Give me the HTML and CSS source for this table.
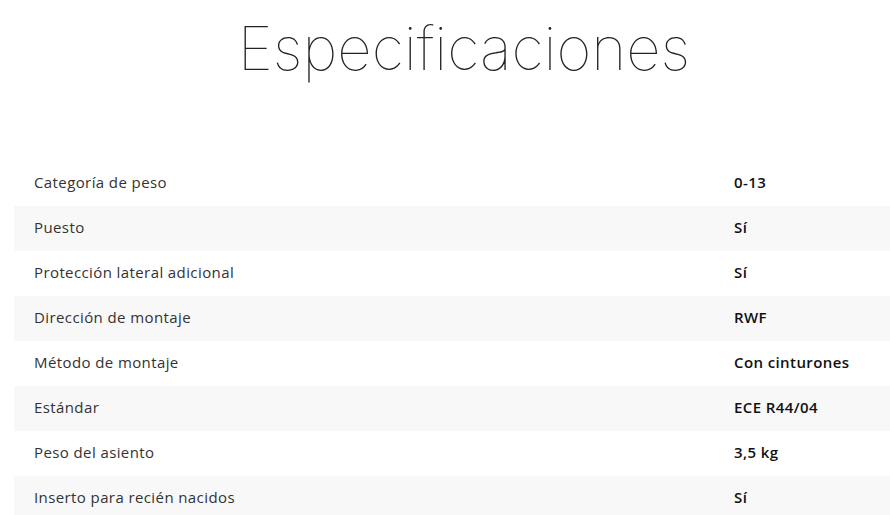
FILE: index.html
```html
<!DOCTYPE html>
<html lang="es">
<head>
<meta charset="utf-8">
<link rel="stylesheet" href="styles.css">
</head>
<body>
<main class="page">
  <h1 class="title">Especificaciones</h1>
  <table class="specs">
    <colgroup><col class="col-label"><col class="col-value"></colgroup>
    <tr><td class="label">Categoría de peso</td><td class="value">0-13</td></tr>
    <tr><td class="label">Puesto</td><td class="value">Sí</td></tr>
    <tr><td class="label">Protección lateral adicional</td><td class="value">Sí</td></tr>
    <tr><td class="label">Dirección de montaje</td><td class="value">RWF</td></tr>
    <tr><td class="label">Método de montaje</td><td class="value">Con cinturones</td></tr>
    <tr><td class="label">Estándar</td><td class="value">ECE R44/04</td></tr>
    <tr><td class="label">Peso del asiento</td><td class="value">3,5 kg</td></tr>
    <tr><td class="label">Inserto para recién nacidos</td><td class="value">Sí</td></tr>
  </table>
</main>
</body>
</html>
```
FILE: styles.css
```css
html, body {
  margin: 0;
  padding: 0;
  overflow: hidden;
  background: #fff;
}
.page {
  width: 900px;
  margin-left: 14px;
  font-family: "Open Sans", "DejaVu Sans", sans-serif;
}
.title {
  margin: 0;
  padding-top: 10px;
  height: 161px;
  box-sizing: border-box;
  text-align: center;
  font-family: Inter, sans-serif;
  font-weight: 100;
  font-size: 60px;
  line-height: 76px;
  color: #222;
}
.specs {
  width: 900px;
  border-collapse: collapse;
  table-layout: fixed;
}
.col-label {
  width: 700px;
}
.col-value {
  width: 200px;
}
.specs tr {
  height: 45px;
}
.specs tr:nth-child(even) {
  background: #f8f8f8;
}
.specs td {
  padding: 0 20px 4px;
  font-size: 15px;
  letter-spacing: 0.4px;
  vertical-align: middle;
  white-space: nowrap;
}
.label {
  color: #333;
}
.value {
  font-weight: 600;
  color: #111;
  letter-spacing: 0.2px;
}
```
